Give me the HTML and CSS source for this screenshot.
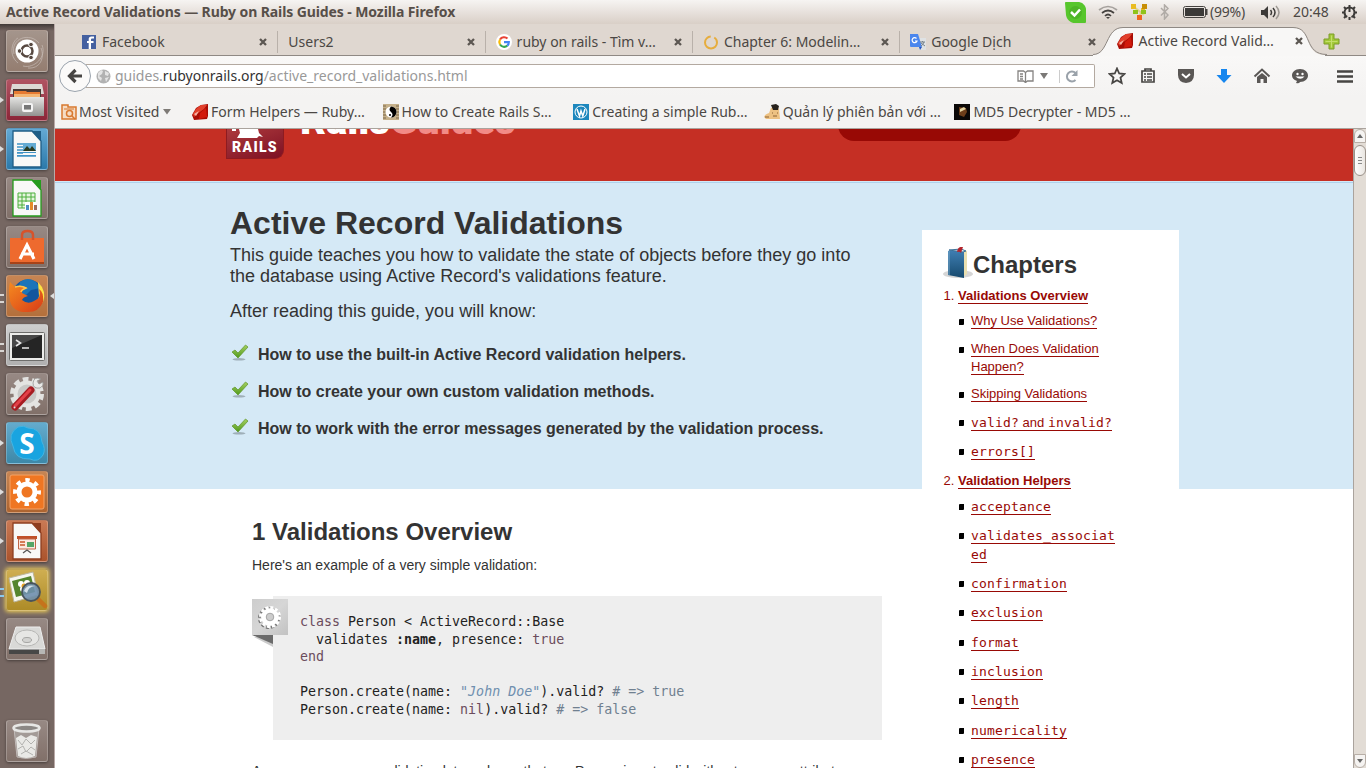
FILE: index.html
```html
<!DOCTYPE html>
<html lang="en">
<head>
<meta charset="utf-8">
<title>Active Record Validations — Ruby on Rails Guides</title>
<link rel="stylesheet" href="styles.css">
</head>
<body>
<svg class="defs" width="0" height="0">
  <defs>
    <linearGradient id="steel" x2="0" y2="1"><stop stop-color="#e4e4e2"/><stop offset="1" stop-color="#929290"/></linearGradient>
    <linearGradient id="fire" x2="1" y2="1"><stop stop-color="#f58a20"/><stop offset="1" stop-color="#d83c18"/></linearGradient>
    <linearGradient id="check" x2="0" y2="1"><stop stop-color="#a6d060"/><stop offset="1" stop-color="#4f9a1c"/></linearGradient>
    <linearGradient id="book" x2="0" y2="1"><stop stop-color="#3f7fb4"/><stop offset="1" stop-color="#174a6e"/></linearGradient>
    <symbol id="ruby" viewBox="0 0 16 16"><path fill="#a80d05" d="M0 11 4 4 9 1 16 0v12l-1 3-13 1z"/><path fill="#e2402c" d="M4 5 9 1h6l-3 4-7 5-3 3-1-3z"/><path fill="#f4b4a6" d="m2 10 5-3-3 5z"/><path fill="#d21a0c" d="m8 9 6-5 1 9-8 2z"/></symbol>
    <symbol id="close" viewBox="0 0 8 8"><path d="m1 1 6 6M7 1 1 7" stroke="#5c5752" stroke-width="2.3"/></symbol>
    <symbol id="tick" viewBox="0 0 18 17"><ellipse cx="8" cy="15.3" rx="6.5" ry="1.2" fill="#7b8890" opacity=".6"/><path d="m1 8 3-2 3 3 7.500-8 2.500 2L7 14z" fill="url(#check)" stroke="#5d9428" stroke-width=".7"/></symbol>
    <symbol id="doc" viewBox="0 0 30 38"><path d="M1 1h19l9 10v26H1z" fill="#f8f8f7" stroke="currentColor" stroke-width="1.300"/><path d="M20 1h9v10z" fill="currentColor"/></symbol>
  </defs>
</svg>

<div class="topbar">
  <span class="wintitle">Active Record Validations — Ruby on Rails Guides - Mozilla Firefox</span>
  <div class="tray">
    <svg class="t-skype" width="21" height="21" viewBox="0 0 21 21"><path d="M1 1h13a7 7 0 0 1 6 8v11l-7 0A9 9 0 0 1 2 13z" fill="#57c62c" stroke="#57c62c" stroke-width="2" stroke-linejoin="round"/><circle cx="10.500" cy="10.500" r="6.500" fill="#4db526"/><path d="m6 10 3.500 3.500L15 7.500" fill="none" stroke="#fff" stroke-width="2.500"/></svg>
    <svg class="t-wifi" width="20" height="14" viewBox="0 0 20 14"><g fill="none" stroke-width="1.700"><path d="M1 5q9-7 18 0" stroke="#a5a19d"/><path d="M4 8q6-5 12 0M7 11q3-3 6 0" stroke="#45423f"/></g><path d="M8 12h4l-2 2z" fill="#45423f"/></svg>
    <svg class="t-net" width="16" height="16" viewBox="0 0 16 16"><path d="m3 3 10 8M13 3 8 13" stroke="#ddd28c" stroke-width="2"/><path fill="#e9bc22" d="M0 0h5v5H0zM10 4h4v4h-4z"/><path fill="#c78e05" d="M11 0h5v5h-5z"/><path fill="#8fc31a" d="M2 6h5v4H2zM10 6h5v4h-5z"/><path fill="#f0641e" d="M6 11h5v5H6z"/></svg>
    <svg class="t-bt" width="9" height="16" viewBox="0 0 9 16"><path d="m1 4 7 7-3.500 4V1L8 4.500l-7 7" fill="none" stroke="#b0aba6" stroke-width="1.500"/></svg>
    <svg class="t-bat" width="25" height="12" viewBox="0 0 25 12"><rect x=".5" y=".5" width="22" height="11" rx="2" fill="none" stroke="#45423f"/><path d="M2 2h19v8H2z" fill="#3c3a38"/><path d="M23 3h1.500v6H23z" fill="#45423f"/></svg>
    <span class="t-pct">(99%)</span>
    <svg class="t-vol" width="20" height="15" viewBox="0 0 20 15"><path d="M0 5h3l4-4v13L3 10H0z" fill="#3c3a38"/><g fill="none" stroke="#3c3a38" stroke-width="1.500"><path d="M9.500 5q2 2.500 0 5M12 3q4 4.500 0 9"/><path stroke="#9e9994" d="M15 1q6 6.500 0 13"/></g></svg>
    <span class="t-time">20:48</span>
    <svg class="t-gear" width="17" height="17" viewBox="0 0 17 17"><circle cx="8.500" cy="8.500" r="5" fill="none" stroke="#3c3a38" stroke-width="2" stroke-dasharray="27 4.400" stroke-dashoffset="-10"/><path d="M8.500 1v7M1 8.500h3M13 8.500h3M8.500 13v3M3 3l2 2M14 3l-2 2M3 14l2-2M14 14l-2-2" stroke="#3c3a38" stroke-width="2"/></svg>
  </div>
</div>

<div class="desktop">
<nav class="launcher">
  <div class="tile dash"><svg viewBox="0 0 42 42"><g fill="none" stroke="#c9beb8" opacity=".65"><path d="M8 24C4 8 24 2 33 13M12 33C2 25 6 11 12 8M36 15c5 12-8 24-19 21M22 38c12 1 17-10 13-20"/></g><circle cx="21" cy="21" r="11.500" fill="#fff"/><circle cx="21" cy="21" r="5.500" fill="none" stroke="#564840" stroke-width="2.500"/><g fill="#564840" stroke="#fff"><circle cx="13.500" cy="21" r="2.300"/><circle cx="25" cy="14.500" r="2.300"/><circle cx="25" cy="27.500" r="2.300"/></g></svg></div>
  <div class="tile files one"><svg viewBox="0 0 42 42"><path d="M6 5h30l2 10H4z" fill="#ddd9d5"/><path d="M7 10h28v9H7z" fill="#4b3a35"/><path d="M8 12h12l1 1h13v6H8z" fill="#e77b32"/><path d="M8 15h26v3H8z" fill="#f5b673"/><path d="M4 18h34v19H4z" fill="url(#steel)"/><rect x="17" y="25" width="9" height="7" rx="1" fill="none" stroke="#f4f4f4" stroke-width="2"/><path d="M18 26h7v4h-7z" fill="#777"/></svg></div>
  <div class="tile writer one"><svg viewBox="0 0 42 42"><use href="#doc" x="6" y="2" width="30" height="38" color="#1f5d86"/><path d="M11 16h6M11 19h6M11 22h6M11 25h6M11 28h19" stroke="#3f92c5" stroke-width="1.500"/><path d="M17 15h13v8H17z" fill="#64abd3"/><path d="m17 23 4-5 3 3 2-3 4 5z" fill="#2a3b20"/><path d="M11 24.500h19M11 27.500h19" stroke="#3f92c5"/></svg></div>
  <div class="tile calc"><svg viewBox="0 0 42 42"><use href="#doc" x="6" y="2" width="30" height="38" color="#259b1d"/><path d="M12 16h17v15H12z" fill="#e6f5de"/><path d="M12 16h17v15H12zM12 20h17M12 24h17M12 28h17M16 16v15M20 16v15M25 16v15" stroke="#4daf3c" fill="none"/><path d="M19 25h11v8H19z" fill="#fff"/><path d="M20 28h3v5h-3z" fill="#508fc4"/><path d="M24 25h3v8h-3z" fill="#e48a28"/><path d="M28 28h3v5h-3z" fill="#9d6c5c"/></svg></div>
  <div class="tile store"><svg viewBox="0 0 42 42"><path d="M4 12h34v26H4z" fill="#ee6a2e"/><path d="M4 36h34v2H4z" fill="#a84318"/><path d="M16 14V9q0-4 5.500-4T27 9v5" fill="none" stroke="#d6532b" stroke-width="2.500"/><path d="m14 33 7-14 7 14M15 28h13" stroke="#fff" stroke-width="3.200" fill="none"/></svg></div>
  <div class="tile firefox two focus"><svg viewBox="0 0 42 42"><circle cx="22" cy="20" r="15.500" fill="#13569e"/><path d="M14 7q8-6 16 0l4 6-9 2-6 6-7-5z" fill="#1b75b9"/><path d="M32 7q9 9 5 20l-7 8 3-14z" fill="#ffe243"/><path d="m4 7 5 5q6-3 12 1-5 1-5 5l6 3q-5 1-6 4 6 5 12 1 8-3 5-12 5 3 4 13-4 10-15 10Q7 38 4 26 2 15 4 7z" fill="url(#fire)"/><path d="M9 12q6-2 11 1-5 2-5 4" fill="none" stroke="#ffc34b" stroke-width="1.500"/></svg></div>
  <div class="tile term two"><svg viewBox="0 0 42 42"><rect x="3.500" y="8.500" width="35" height="28" rx="1" fill="#ececea" stroke="#6d6d6b"/><path d="M6 11h30v23H6z" fill="#252525"/><path d="M6 11h30L6 24z" fill="#484848"/><path d="m10 16 4.500 3-4.500 3M16 24h7" fill="none" stroke="#e7e7e7" stroke-width="1.600"/></svg></div>
  <div class="tile tools"><svg viewBox="0 0 42 42"><circle cx="21" cy="21" r="14.500" fill="none" stroke="#e2e2e0" stroke-width="5" stroke-dasharray="5.600 3.510"/><circle cx="21" cy="21" r="11.500" fill="#c8c8c6" stroke="#e4e4e2" stroke-width="4"/><path d="m26 16 5-5" stroke="#d6d6d4" stroke-width="5"/><path d="M35 6q-7-3-8 4 0 6 7 5 4-2 3-6l-4 2-2-3z" fill="#e9e9e7" stroke="#8c8c8a" stroke-width=".7"/><path d="m25 17-16 17" stroke="#a61c22" stroke-width="7" stroke-linecap="round"/><path d="m24 17-15 16" stroke="#e34048" stroke-width="3" stroke-linecap="round"/><circle cx="8.500" cy="34.500" r="1" fill="#ddd"/></svg></div>
  <div class="tile skype one"><svg viewBox="0 0 42 42"><path d="M12 5q6-2 10 1 13 0 14 14 4 7 1 13-5 8-13 4Q9 38 7 24 1 12 12 5z" fill="#19a4e0" stroke="#43b5e2" stroke-width="1"/><text x="21" y="31.500" class="skype-s">S</text></svg></div>
  <div class="tile settings one"><svg viewBox="0 0 42 42"><rect x="4" y="4" width="34" height="34" rx="2" fill="#ef7622" stroke="#f5a367"/><circle cx="21" cy="21" r="8" fill="none" stroke="#fff" stroke-width="5"/><circle cx="21" cy="21" r="11.700" fill="none" stroke="#fff" stroke-width="4.500" stroke-dasharray="4.300 4.890" stroke-dashoffset="2"/></svg></div>
  <div class="tile impress one"><svg viewBox="0 0 42 42"><use href="#doc" x="6" y="2" width="30" height="38" color="#8d3e20"/><path d="M11 16h20v3H11z" fill="#c05029"/><path d="M12.500 19h17v10h-17z" fill="#fbe8df" stroke="#c06748"/><path d="M14 22h5M14 25h5" stroke="#d47b56" stroke-width="2"/><path d="M21 22h7v5h-7z" fill="#55a566"/><path d="m17 33 4-3 4 3" fill="none" stroke="#555" stroke-width="1.300"/></svg></div>
  <div class="tile viewer two blue"><svg viewBox="0 0 42 42"><path d="m3 9 24-6 5 23-24 7z" fill="#f6f6ee" stroke="#bbb59b"/><path d="m6 12 19-5 4 16-19 5z" fill="#55852d"/><g fill="#fff"><circle cx="15" cy="15" r="3"/><circle cx="21" cy="14" r="3"/><circle cx="17" cy="20" r="3"/></g><circle cx="18" cy="17" r="2.500" fill="#e8a122"/><path d="m32 30 7 7" stroke="#c5731c" stroke-width="4.500" stroke-linecap="round"/><circle cx="25" cy="23" r="9" fill="#6f8fae" fill-opacity=".9" stroke="#49545c" stroke-width="1.800"/><path d="M18 22q3-7 11-5-7 1-8 7z" fill="#d4e0e9"/></svg></div>
  <div class="tile disk"><svg viewBox="0 0 42 42"><path d="M10 9h24l5 22H3z" fill="#d9d9d7" stroke="#eee"/><ellipse cx="21" cy="20" rx="12" ry="8" fill="#e6e6e4" stroke="#b6b6b4"/><ellipse cx="21" cy="22" rx="4.500" ry="2.500" fill="#d3d3d1" stroke="#a5a5a3"/><path d="M3 31h36v5H3z" fill="#474746"/><path d="M3 31h36v1H3z" fill="#999"/><path d="M33 31h6v5h-6z" fill="#b7b7b5"/></svg></div>
  <div class="tile trash"><svg viewBox="0 0 42 42"><path d="m8 8 3 29q9 3 19 0l3-29z" fill="#b3b1ae" opacity=".55" stroke="#eee"/><path d="m10 18 5-3 5 3 5-3 6 2-2 19q-9 4-17 0z" fill="#e9e9e6"/><path d="m12 20 4 5 4-6 5 5 4-4M12 29l5-3 3 6 5-5 4 3M15 34l5-3 7 4" fill="none" stroke="#b2b2af"/><ellipse cx="20.500" cy="8" rx="13" ry="3.500" fill="#8c8885" stroke="#e7e7e5" stroke-width="2.500"/></svg></div>
</nav>

<main class="browser">
  <div class="tabs">
    <div class="tab"><svg class="fav" viewBox="0 0 16 16"><path d="M1 1h14v14H1z" fill="#4460a0"/><path d="M10 15V9h2.500V7H10V5.500q0-1 1-1h2v-2h-2.500Q7.700 2.500 7.700 5v2H6v2h1.700v6z" fill="#fff"/></svg><span class="f1">Facebook</span><svg class="x"><use href="#close"/></svg></div>
    <div class="tab sep"><span class="f2">Users2</span><svg class="x"><use href="#close"/></svg></div>
    <div class="tab sep"><svg class="fav" viewBox="0 0 16 16"><circle cx="8" cy="8" r="8" fill="#fff"/><g fill="none" stroke-width="2.200"><path d="M4 5.500A5 5 0 0 1 11.500 4.500" stroke="#e94235"/><path d="M4 5.500a5 5 0 0 0 0 5" stroke="#fabb05"/><path d="M4 10.500a5 5 0 0 0 7.300 1.200" stroke="#34a853"/><path d="M11.300 11.700q1.500-1.500 1.500-3.500H8" stroke="#4285f4"/></g></svg><span class="f3">ruby on rails - Tìm v…</span><svg class="x"><use href="#close"/></svg></div>
    <div class="tab sep"><svg class="fav" viewBox="0 0 16 16"><circle cx="8" cy="8.500" r="6" fill="none" stroke="#e6ad3e" stroke-width="2" stroke-dasharray="34 3.700" stroke-dashoffset="-31"/></svg><span class="f4">Chapter 6: Modelin…</span><svg class="x"><use href="#close"/></svg></div>
    <div class="tab sep"><svg class="fav" viewBox="0 0 16 16"><path d="M7 4h9v12H9z" fill="#dfe2e4"/><path d="M0 0h8l4 13H1q-1 0-1-1z" fill="#4b86ed"/><path d="m9 13 3 0-2 3z" fill="#2855be"/><path d="M6.500 4.500a2.500 2.500 0 1 0 .5 2.500H5" fill="none" stroke="#fff" stroke-width="1.200"/><path d="M10 8h5M12.500 7v1M14 8q-1 3-3 4M11 9l4 3" stroke="#77828a" fill="none"/></svg><span class="f5">Google Dịch</span><svg class="x"><use href="#close"/></svg></div>
    <div class="tab active"><svg class="shape" width="236" height="29" viewBox="0 0 236 29"><path d="M0 28C16 28 12 1 30 1H200C220 1 210 28 232 28V29H0z" fill="#f8f7f6"/><path d="M0 27.500C16 27.500 12 .5 30 .5H200C220 .5 210 27.500 234 27.500" fill="none" stroke="#8f8984"/></svg><svg class="fav"><use href="#ruby"/></svg><span class="f6">Active Record Valid…</span><svg class="x"><use href="#close"/></svg></div>
    <svg class="plus" width="17" height="17" viewBox="0 0 17 17"><path d="M6 1h5v5h5v5h-5v5H6v-5H1V6h5z" fill="#a2c838" stroke="#7c9c28" stroke-width="1"/><path d="M8.500 2.500v12M2.500 8.500h12" stroke="#c4df6b"/></svg>
  </div>

  <div class="navbar">
    <div class="back"><svg width="16" height="16" viewBox="0 0 16 16"><path d="M8.500 2 2.500 8l6 6M3 8h12" fill="none" stroke="#474543" stroke-width="3.200"/></svg></div>
    <div class="url">
      <svg class="globe" width="15" height="15" viewBox="0 0 15 15"><circle cx="7.500" cy="7.500" r="7" fill="#b2b2b2"/><path d="m2 4 3-3 2 1-1 3-3 2 3 2-1 3-3-3zM9 2l4 2-1 3-3-1zM9 9l4-1-3 5z" fill="#e4e4e4"/></svg>
      <span class="addr">guides.<b>rubyonrails.org</b>/active_record_validations.html</span>
      <svg class="reader" width="17" height="13" viewBox="0 0 17 13"><path d="M1 1h5.500l2 1.500 2-1.500H16v10h-5.500l-2 1.500-2-1.500H1zM8.500 2.500v9M3 4h3M3 6.500h3M3 9h3" fill="none" stroke="#858381" stroke-width="1.300"/></svg>
      <svg class="drop" width="9" height="6" viewBox="0 0 9 6"><path d="M0 0h8L4 6z" fill="#7b7977"/></svg>
      <svg class="reload" width="13" height="13" viewBox="0 0 13 13"><path d="M10 10a5 5 0 1 1 0-7" fill="none" stroke="#9aa2aa" stroke-width="2"/><path d="M12 0v6H6z" fill="#9aa2aa"/></svg>
    </div>
    <div class="tools-row">
      <svg viewBox="0 0 18 18"><path d="m9 1.500 2.200 5 5.300.5-4 3.600 1.200 5.400L9 13.200 4.300 16l1.200-5.400L1.500 7l5.300-.5z" fill="none" stroke="#474543" stroke-width="1.800"/></svg>
      <svg viewBox="0 0 18 18"><path d="M3 4h12v11H3zM6 4V2h6v2M5 7h2M8 7h5M5 10h2M8 10h5M5 13h2M8 13h5" fill="none" stroke="#474543" stroke-width="1.700"/></svg>
      <svg viewBox="0 0 18 18"><path d="M1 2h16v6q0 7-8 8-8-1-8-8z" fill="#5a5755"/><path d="m5 7 4 3.500L13 7" fill="none" stroke="#fff" stroke-width="2"/></svg>
      <svg viewBox="0 0 18 18"><path d="M6 2h6v6h4.500L9 16 1.500 8H6z" fill="#1686ee"/></svg>
      <svg viewBox="0 0 18 18"><path d="m1.500 9.500 7.500-7 7.500 7" fill="none" stroke="#5a5755" stroke-width="2"/><path d="m4 10 5-4 5 4v6h-3.500v-4h-3v4H4z" fill="#5a5755"/></svg>
      <svg viewBox="0 0 18 18"><path d="M9 2c5 0 8 3 8 6.500S14 15 9 15q-1 2-4 1l1-2Q1 12 1 8.500C1 5 4 2 9 2z" fill="#5a5755"/><circle cx="6.500" cy="7" r="1.200" fill="#fff"/><circle cx="11.500" cy="7" r="1.200" fill="#fff"/><path d="M4.500 9.500h9q-4 4.500-9 0z" fill="#fff"/></svg>
    </div>
    <svg class="menu" width="16" height="13" viewBox="0 0 16 13"><path d="M0 1.500h16M0 6.500h16M0 11.500h16" stroke="#474543" stroke-width="2.500"/></svg>
  </div>

  <div class="bookmarks">
    <div class="bm b1"><svg class="fav" viewBox="0 0 16 16"><path d="M1 1h6v2h8v12H1z" fill="#f5dcc4" stroke="#d8792f" stroke-width="1.500"/><path d="M3 5h10" stroke="#d8792f"/><circle cx="8.500" cy="9.500" r="3" fill="none" stroke="#d8792f" stroke-width="1.500"/><path d="m11 12 3 3" stroke="#d8792f" stroke-width="1.500"/></svg><span>Most Visited</span><svg class="tri" width="8" height="6" viewBox="0 0 8 6"><path d="M0 0h8L4 5.500z" fill="#7e7a76"/></svg></div>
    <div class="bm b2"><svg class="fav"><use href="#ruby"/></svg><span>Form Helpers — Ruby…</span></div>
    <div class="bm b3"><svg class="fav" viewBox="0 0 16 16"><path d="M0 0h16v16H0z" fill="#c5b08a"/><path d="M0 2h3M0 5h3M0 8h3M0 11h3M0 14h3M13 2h3M13 5h3M13 8h3M13 11h3M13 14h3" stroke="#7d694b"/><circle cx="8" cy="8" r="5.500" fill="#fff"/><path d="M8 2.500a5.500 5.500 0 0 1 0 11q3-3 0-5.500t0-5.500z"/><circle cx="7" cy="11" r="1"/></svg><span>How to Create Rails S…</span></div>
    <div class="bm b4"><svg class="fav" viewBox="0 0 16 16"><path d="M0 0h16v16H0z" fill="#1d87bd"/><circle cx="8" cy="8" r="6" fill="none" stroke="#fff" stroke-width="1"/><path d="m4 5 2.500 7L8 7l1.800 5L12 5" fill="none" stroke="#fff" stroke-width="1.500"/></svg><span>Creating a simple Rub…</span></div>
    <div class="bm b5"><svg class="fav" viewBox="0 0 16 16"><path d="M7 4q5-2 8 1l1 10H2L0 13q1-3 5-4z" fill="#edc182"/><path d="m7 1 5-1 3 2-1 4-5 0z" fill="#28221c"/><path d="M8 9h1M13 9h1M9 12h4M1 13h4" stroke="#8c6235"/></svg><span>Quản lý phiên bản với …</span></div>
    <div class="bm b6"><svg class="fav" viewBox="0 0 16 16"><path d="M0 0h16v16H0z" fill="#0b0807"/><path d="m5 3 7 1 1 4-3 5-5-2z" fill="#6d3e1a"/><path d="m6 5 4-2 2 2-6 3z" fill="#e3d3a2"/></svg><span>MD5 Decrypter - MD5 …</span></div>
  </div>

  <div class="viewport">
    <div class="page">
      <header class="site-head">
        <div class="logo">RAILS<svg class="train" width="38" height="14" viewBox="0 0 38 14"><path d="M1 0h4v2H1zM8 0h19l1 4 4 4-4-1-2 2H6l3-5z" fill="#fff"/></svg></div>
        <div class="brand">Rails<span>Guides</span></div>
        <div class="pill"></div>
      </header>
      <div class="sheet">
        <div class="feature-bg"></div>
        <section class="feature">
          <h1>Active Record Validations</h1>
          <p>This guide teaches you how to validate the state of objects before they go into<br>the database using Active Record's validations feature.</p>
          <p>After reading this guide, you will know:</p>
          <ul class="know">
            <li><svg width="18" height="17"><use href="#tick"/></svg>How to use the built-in Active Record validation helpers.</li>
            <li><svg width="18" height="17"><use href="#tick"/></svg>How to create your own custom validation methods.</li>
            <li><svg width="18" height="17"><use href="#tick"/></svg>How to work with the error messages generated by the validation process.</li>
          </ul>
        </section>
        <aside class="chapters">
          <h3><svg width="30" height="32" viewBox="0 0 30 32"><ellipse cx="15" cy="27" rx="15" ry="4" fill="#8a8a8a" opacity=".35"/><path d="m6 4 12-2 6 2v23l-4 3-15-3z" fill="#e9dfb0"/><path d="m5 4 3-1 13 2v26L5 28z" fill="url(#book)"/><path d="M6 4v24" stroke="#77a8ca"/><path d="m6 3 12-1 5 2-3 1z" fill="#e8eef1" stroke="#3b7199"/><path d="M14 5q1-6 6-5l-2 6q-1-2-4-1z" fill="#b3232b"/></svg>Chapters</h3>
          <ol>
            <li><a class="top">Validations Overview</a>
              <ul>
                <li class="s"><a>Why Use Validations?</a></li>
                <li class="s"><a>When Does Validation<br>Happen?</a></li>
                <li class="s last-s"><a>Skipping Validations</a></li>
                <li><a><code>valid?</code> and <code>invalid?</code></a></li>
                <li><a><code>errors[]</code></a></li>
              </ul>
            </li>
            <li><a class="top">Validation Helpers</a>
              <ul>
                <li><a><code>acceptance</code></a></li>
                <li><a><code>validates_associat<br>ed</code></a></li>
                <li><a><code>confirmation</code></a></li>
                <li><a><code>exclusion</code></a></li>
                <li><a><code>format</code></a></li>
                <li><a><code>inclusion</code></a></li>
                <li><a><code>length</code></a></li>
                <li><a><code>numericality</code></a></li>
                <li><a><code>presence</code></a></li>
              </ul>
            </li>
          </ol>
        </aside>
        <section class="body">
          <h2>1 Validations Overview</h2>
          <p>Here's an example of a very simple validation:</p>
          <div class="code"><svg class="codeicon" width="36" height="50" viewBox="0 0 36 50"><defs><linearGradient id="sq" x2="1" y2="1"><stop stop-color="#cdcdcd"/><stop offset=".5" stop-color="#d6d6d6"/><stop offset="1" stop-color="#c2c2c2"/></linearGradient></defs><path d="M2 38h19v10z" fill="#ccc"/><path d="M0 36h21v9z" fill="#6b6b6b"/><path d="M0 0h36v36H0z" fill="url(#sq)"/><circle cx="17" cy="19" r="9.500" fill="none" stroke="#777" stroke-width="3" stroke-dasharray="2.900 2.070"/><circle cx="18" cy="18" r="9.500" fill="none" stroke="#fff" stroke-width="3" stroke-dasharray="2.900 2.070"/><circle cx="18" cy="18" r="6.300" fill="none" stroke="#fff" stroke-width="5"/><circle cx="18" cy="18" r="3.800" fill="#ccc" stroke="#999" stroke-width=".8"/></svg><pre><i>class</i> Person &lt; ActiveRecord::Base
  validates <b>:name</b>, presence: <i>true</i>
<i>end</i>

Person.create(name: <em>"John Doe"</em>).valid? <u># =&gt; true</u>
Person.create(name: <i>nil</i>).valid? <u># =&gt; false</u></pre></div>
          <p>As you can see, our validation lets us know that our Person is not valid without a name attribute.</p>
        </section>
      </div>
    </div>
    <div class="scroll">
      <div class="sb up"><svg width="7" height="4" viewBox="0 0 7 4"><path d="M0 4h6L3 0z" fill="#666"/></svg></div>
      <div class="thumb"></div>
      <div class="sb down"><svg width="7" height="4" viewBox="0 0 7 4"><path d="M0 0h6L3 4z" fill="#666"/></svg></div>
    </div>
  </div>
</main>
</div>
</body>
</html>
```
FILE: styles.css
```css
* { box-sizing: border-box; }
html, body { margin: 0; width: 1366px; height: 768px; overflow: hidden; }
body { display: flex; flex-direction: column; font: 14px/20px "Noto Sans", sans-serif; color: #4b4744; background: #fff; }
.defs { position: absolute; }
svg { display: block; flex: none; }
span { white-space: nowrap; }

.topbar { height: 24px; flex: none; display: flex; align-items: center; justify-content: space-between; padding: 0 8px 0 6px; background: linear-gradient(#f6f4f2, #d9cfc7); }
.wintitle { font-weight: 700; font-size: 14px; color: #574f49; letter-spacing: -.1px; }
.tray { display: flex; align-items: center; font-size: 14px; }
.t-wifi { margin-left: 12px; }
.t-net { margin-left: 13px; }
.t-bt { margin-left: 13px; }
.t-bat { margin-left: 14px; }
.t-pct { width: 38px; margin-left: 2px; letter-spacing: -.2px; }
.t-vol { margin-left: 13px; }
.t-time { width: 38px; margin-left: 12px; letter-spacing: 0; }
.t-gear { margin-left: 10px; }

.desktop { display: flex; height: 744px; }
.launcher { width: 55px; flex: none; display: flex; flex-direction: column; gap: 7px; padding: 6px 0 0 6px; background: linear-gradient(#352e2c, #75655f 8px, #76676a 95%); background: linear-gradient(#403937, #76676200 7px), #766762; border-right: 1px solid #b9a9a7; }
.tile { position: relative; width: 42px; height: 42px; flex: none; border-radius: 3px; border: 1px solid #ffffff38; box-shadow: 0 1px 3px #0006; background: linear-gradient(#978984, #817069); }
.tile svg { width: 42px; height: 42px; margin: -1px; }
.dash { background: linear-gradient(#a4958c, #947d70); }
.files { background: linear-gradient(#b05362, #8c2638); }
.writer { background: linear-gradient(#64a9d4, #2b79aa); }
.firefox { background: linear-gradient(#c78553, #b4703c); }
.term { background: linear-gradient(#cdcdcd, #b0b0b0); }
.skype { background: linear-gradient(#64abcd, #3d88a8); }
.settings { background: linear-gradient(#c78553, #ad6430); }
.impress { background: linear-gradient(#c97954, #aa532c); }
.viewer { background: linear-gradient(#cfae51, #ad8b27); box-shadow: 0 0 4px 1px #f0cf57; }
.trash { margin-top: 53px; }
.skype-s { font: 700 28px "Noto Sans", sans-serif; fill: #fff; text-anchor: middle; }
.one::before { content: ""; position: absolute; left: -7px; top: 17px; border: 3.500px solid transparent; border-left: 4px solid #ddd; border-right: 0; }
.two::before { content: ""; position: absolute; left: -7px; top: 18px; width: 4px; height: 5px; border: solid #d8d5d2; border-width: 2px 0; }
.blue::before { border-color: #8bc9ee; }
.focus::after { content: ""; position: absolute; right: -7px; top: 17px; border: 3.500px solid transparent; border-right: 4px solid #ddd; border-left: 0; }

.browser { flex: 1; min-width: 0; display: flex; flex-direction: column; background: #f4f3f2; }
.tabs { height: 32px; flex: none; display: flex; align-items: center; padding-left: 15px; background: #dfd7d0; border-bottom: 1px solid #8f8984; }
.tab { position: relative; width: 207.300px; height: 22px; margin-top: 4px; display: flex; align-items: center; padding: 0 10px; gap: 5px; border-left: 1px solid transparent; flex: none; }
.sep { border-left-color: #b9b1aa; }
.fav { width: 16px; height: 16px; }
.tab span { flex: 1; position: relative; }
.x { width: 8px; height: 8px; }
.active .shape { position: absolute; left: -14px; top: 0; }
.active .fav, .active .x { position: relative; }
.active { width: 211px; height: 28px; margin-top: 3px; align-items: center; padding-right: 14px; }
.plus { margin: 3px 0 0 6px; }

.navbar { height: 40px; flex: none; display: flex; align-items: center; padding-left: 4px; background: linear-gradient(#f9f8f7, #f4f3f2); }
.back { width: 32px; height: 32px; flex: none; z-index: 1; border-radius: 50%; border: 1px solid #9aa3ad; background: #fbfaf9; display: grid; place-items: center; }
.url { width: 1009px; height: 24px; margin-left: -5px; flex: none; display: flex; align-items: center; padding-left: 10px; border: 1px solid #b3a9a0; border-left: 0; border-radius: 0 2px 2px 0; background: #fff; }
.addr { flex: 1; margin-left: 4px; color: #999; }
.addr b { font-weight: 400; color: #333; }
.drop { margin: 0 0 0 6px; }
.reload { margin: 0 10px 0 22px; }
.drop + .reload { margin-left: 10px; padding: 0; }
.reload { width: 25px; padding-left: 10px; border-left: 1px solid #ccc; }
.tools-row { display: flex; gap: 20px; margin-left: 13px; }
.tools-row svg { width: 18px; height: 18px; }
.tools-row svg:first-child { margin-right: -7px; }
.menu { margin-left: auto; margin-right: 13px; }

.bookmarks { height: 33px; flex: none; display: flex; align-items: center; padding-left: 6px; border-bottom: 1px solid #aaa39d; }
.bm { width: 190.600px; display: flex; align-items: center; gap: 3px; flex: none; }
.b1 { width: 131px; gap: 2px; }
.tri { margin-left: 2px; }

.viewport { flex: 1; min-height: 0; display: flex; }
.page { width: 1298px; flex: none; overflow: hidden; background: #fff; font-family: "Liberation Sans", Arial, sans-serif; color: #333; }
.site-head { height: 52px; display: flex; align-items: flex-start; padding-left: 171px; background: #c52f24; overflow: hidden; }
.logo { position: relative; width: 58px; height: 30px; flex: none; padding: 10px 0 0; text-align: center; border-radius: 0 0 9px 0; background: linear-gradient(160deg, #ad3a3d, #7d1023); border: 1px solid #8d1b21; border-top: 0; color: #fff; font: 900 14px/16px Roboto, sans-serif; letter-spacing: 1.300px; }
.train { position: absolute; left: 4px; top: 0; }
.brand { margin: -31px 0 0 16px; width: 216px; white-space: nowrap; color: #fff; font: 900 40px/46px Roboto, sans-serif; letter-spacing: 0; }
.brand span { color: #f28b87; }
.pill { margin: -24px 0 0 322px; width: 183px; height: 36px; border-radius: 0 0 16px 16px; background: #980905; }
.sheet { display: grid; grid-template-columns: 175px 692px 257px 1fr; grid-template-rows: 308px auto; }
.feature-bg { grid-area: 1 / 1 / 2 / 5; background: #d5e9f6; border-top: 1px solid #d5e9f6; box-shadow: inset 0 1px #afd2ec; }
.feature { grid-area: 1 / 2; }
.feature h1 { margin: 24px 0 0; font-size: 32px; line-height: 36px; white-space: nowrap; }
.feature p { margin: 4px 0 14px; font-size: 18px; line-height: 21px; white-space: nowrap; }
.know { list-style: none; margin: 23px 0 0; padding: 0; font-weight: 700; font-size: 16px; line-height: 19px; }
.know li { display: flex; gap: 9px; margin-bottom: 18px; padding-left: 1px; white-space: nowrap; }
.know svg { margin-top: -1px; }

.chapters { grid-area: 1 / 3 / 3 / 4; margin-top: 49px; height: 560px; background: #fff; padding: 17px 0 0 21px; font-size: 13px; line-height: 18px; color: #980905; }
.chapters h3 { display: flex; margin: 0 0 8px; height: 32px; line-height: 36px; font-size: 24px; color: #333; }
.chapters h3 svg { width: 30px; margin-left: 0; }
.chapters ol { margin: 0; padding-left: 15px; }
.chapters ul { list-style: none; margin: 7px 0 0 -2px; padding-left: 15px; }
.chapters ul li { position: relative; height: auto; margin-bottom: 10.300px; line-height: 19px; }
.chapters ul li.s { line-height: 18px; margin-bottom: 9.500px; }
.chapters ul li.last-s { margin-bottom: 10px; }
.chapters ul li::before { content: ""; position: absolute; left: -12px; top: 7px; width: 5px; height: 6px; border-radius: 1px 0 1px 0; background: #000; }
.chapters a { border-bottom: 1px solid #980905; line-height: 14px; }
.chapters .top { font-weight: 700; }
.chapters code { font: 13px/14px "DejaVu Sans Mono", monospace; letter-spacing: .17px; }

.body { grid-area: 2 / 2; padding-left: 22px; }
.body h2 { margin: 29px 0 0; font-size: 24px; line-height: 28px; }
.body p { margin: 9px 0 0; font-size: 14px; line-height: 20px; white-space: nowrap; }
.code { position: relative; margin: 21px 0 21px 21px; width: 609px; height: 144px; background: #eee; padding: 17px 0 0 27px; }
.codeicon { position: absolute; left: -21px; top: 3px; }
pre { margin: 0; font: 13.300px/17.600px "DejaVu Sans Mono", monospace; color: #222; }
pre i { font-style: normal; color: #6b4c5c; }
pre em { color: #6f8fae; }
pre u { text-decoration: none; color: #708090; }

.scroll { flex: 1; display: flex; flex-direction: column; border-left: 1px solid #aaa39d; background: #e2dcd5; align-items: stretch; }
.sb { height: 14px; display: grid; place-items: center; background: #f5f3f1; border: 1px solid #b7aea6; border-radius: 6px 6px 0 0; }
.down { margin-top: auto; border-radius: 0 0 6px 6px; }
.thumb { height: 31px; margin-top: 2px; border: 1px solid #9b928a; border-radius: 6px; background: repeating-linear-gradient(#888 0 1px, transparent 1px 3px) center / 4px 7px no-repeat, linear-gradient(90deg, #fff, #e9e5e0); }
```
